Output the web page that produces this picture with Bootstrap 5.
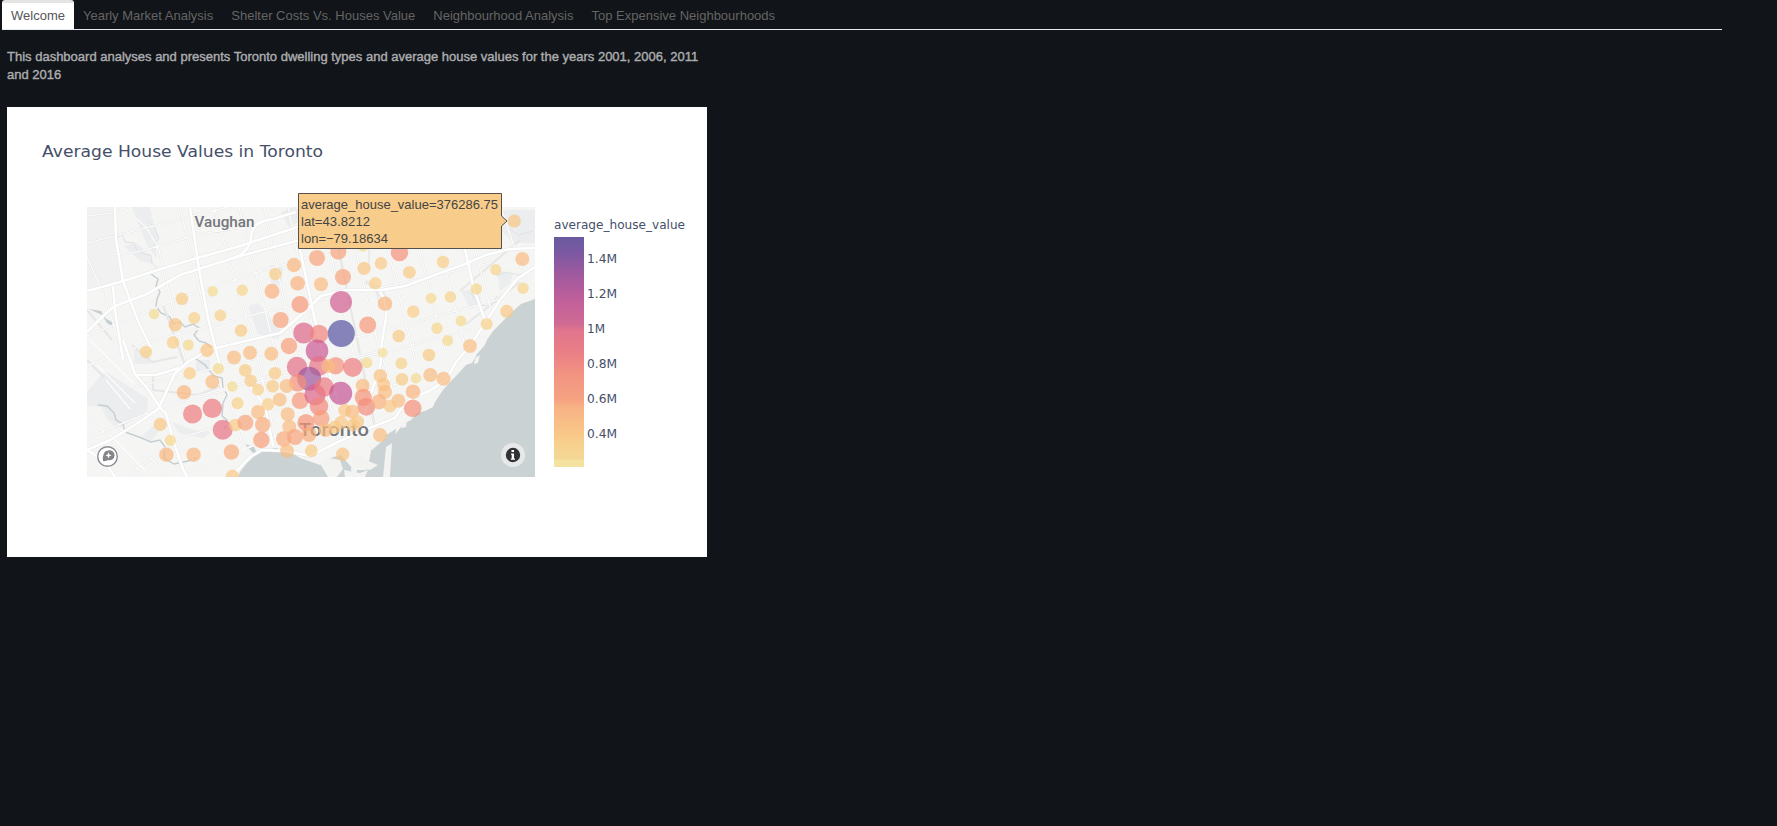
<!DOCTYPE html>
<html lang="en">
<head>
<meta charset="utf-8">
<title>Toronto Housing Dashboard</title>
<link rel="stylesheet" href="https://cdn.jsdelivr.net/npm/bootstrap@5.3.0/dist/css/bootstrap.min.css">
<script src="https://cdn.jsdelivr.net/npm/bootstrap@5.3.0/dist/js/bootstrap.bundle.min.js"></script>
<style>
body{background:#111418;font-family:"Liberation Sans",Arial,sans-serif;font-size:13px;min-height:826px;overflow:hidden}
.dash-tabs{width:1720px;height:30px;margin-left:2px;border-bottom:1px solid #e7e9ee}
.dash-tabs .nav-link{height:29px;padding:7px 9px 0;line-height:17px;color:#656565;border:0;border-radius:0;white-space:nowrap}
.dash-tabs .nav-link.active{background:#fff;color:#55555a;border-top:3px solid #e4e4e4;padding-top:4px;border-radius:3px 3px 0 0}
.intro{width:700px;margin:18px 0 0 7px;line-height:18px;height:59px;color:#acadaf;-webkit-text-stroke:.4px #acadaf}
.plot{width:700px;height:450px;margin-left:7px;background:#fff}
.plot svg{display:block}
.vd{font-family:"DejaVu Sans",Verdana,sans-serif;fill:#454f69}
.ar{font-family:"Liberation Sans",Arial,sans-serif;font-size:13px;fill:#444}
.place{font-family:Roboto,sans-serif;font-weight:500;fill:#74767b}
</style>
</head>
<body>
<ul class="nav nav-tabs flex-nowrap dash-tabs">
  <li class="nav-item"><a class="nav-link active" href="#">Welcome</a></li>
  <li class="nav-item"><a class="nav-link" href="#">Yearly Market Analysis</a></li>
  <li class="nav-item"><a class="nav-link" href="#">Shelter Costs Vs. Houses Value</a></li>
  <li class="nav-item"><a class="nav-link" href="#">Neighbourhood Analysis</a></li>
  <li class="nav-item"><a class="nav-link" href="#">Top Expensive Neighbourhoods</a></li>
</ul>
<main>
<p class="intro">This dashboard analyses and presents Toronto dwelling types and average house values for the years 2001, 2006, 2011<br>and 2016</p>
<div class="plot">
<svg width="700" height="450" viewBox="7 107 700 450">
<defs>
  <clipPath id="mapclip"><rect x="87" y="207" width="448" height="270"/></clipPath>
  <linearGradient id="sunset" x1="0" y1="0" x2="0" y2="1">
    <stop offset="0" stop-color="#6a5aa0"/><stop offset=".07" stop-color="#7b58a1"/><stop offset=".16" stop-color="#9f5a9f"/><stop offset=".28" stop-color="#c2609a"/><stop offset=".38" stop-color="#d06b93"/><stop offset=".405" stop-color="#e0748d"/><stop offset=".5" stop-color="#ea7f87"/><stop offset=".6" stop-color="#f29481"/><stop offset=".715" stop-color="#f6a482"/><stop offset=".735" stop-color="#f7b184"/><stop offset=".86" stop-color="#f8c888"/><stop offset=".91" stop-color="#f6d28e"/><stop offset=".965" stop-color="#f4d796"/><stop offset=".97" stop-color="#f4e3a0"/><stop offset="1" stop-color="#f4e3a0"/>
  </linearGradient>
</defs>
<text class="vd" x="42" y="157" font-size="16.300" textLength="281" lengthAdjust="spacingAndGlyphs">Average House Values in Toronto</text>
<g clip-path="url(#mapclip)">
  <rect x="87" y="207" width="448" height="270" fill="#f5f5f3"/>
  <!-- parks and built-up areas -->
  <g fill="#ebedee">
    <path d="M87 207H113L116 238 121 282 87 291Z" fill="#f1f1f1"/>
    <path d="M87 392L105 371 148 399 147 412 118 429 108 420 101 407 87 406Z"/>
    <path d="M132 207h18l3 14 5 14-2 22-9-12-8-19zM124 246l12-3 14 12 2 9-13-4zM250 305l8-2 25 30-6 6-19-5-9-25zM134 350h16v14h-16zM196 360h14v12h-14zM270 265l13 3-2 18-10-3zM281 212l15-6 5 14-12 8zM500 210h35v33h-20l-15-13zM497 270l16 4-3 9-10 8zM142 436l12-11 6 5-9 11zM461 291l16-3 5 16-12 5zM363 278l20 10 10 23-12-12zM172 422l25 9 14 1-8 6-24-5z"/>
  </g>
  <!-- rivers -->
  <g fill="none" stroke="#c5ced0" stroke-width="1.4">
    <path d="M151 274l7 5-2 7 4 6-3 7-1 7 5 7 9 4 3 7 7-2 5 5 8-3 6 4-5 7 5 6 7 2 7 6M195 358l10 7 9 11 8 2 1 9 4 8-4 8-1 13 5 4-2 9M98 405l9 1 7 7 2 7 7 4 2 8 14 5 12 5 9-2 5 7-1 11 10 6 14-3 8-3"/>
  </g>
  <path d="M116 240l6-6 3 8 9 1 2 6 7 5 8 1 1 8 5 5M155 245l4-7-5-11-6-5M470 292l9 13 12 1 6-10M369 248v18M507 228l12 7 14-4M496 276l10-4 13 3 13-5M365 282l12 10 2 11 11 7" fill="none" stroke="#dfe3e5"/>
  <path d="M89 309l12 2 4 7 10 6v4l-8-5-5-8zM245 444l9 3 4 8-4-1z" fill="#c5ced0"/>
  <!-- local streets -->
  <g fill="none" stroke="#e7e7e8" stroke-width="2.200">
    <path id="streets" d="M87 243L240 204M87 216L112 213 124 208 145 226 157 245V258M112 255L142 251 165 244 206 233 255 226M87 336L180 298 265 270 338 249 420 226M87 366L155 340 280 308 394 285 490 263M131 388L245 361 375 333 500 299M87 438L160 408 245 385 385 352 470 330M157 407L270 376 390 349M130 474L180 438 255 415 350 395 440 374M183 477L270 438 390 405M180 208L202 300 222 370 251 477M214 207L235 280 256 350 276 440M239 207L269 326 296 445M264 207L286 310 317 446M288 207L309 310 338 440M322 214L351 344 372 430M351 230L377 340 398 408M382 225L415 360M414 230L445 350M437 235L465 346M472 238L491 310M502 210L530 295M87 257L106 300 122 352M158 246L185 360M87 416L118 447 145 477M118 427L170 477M145 412L198 465"/>
    <path d="M87 360L104 377M132 345l20 17 25-5M163 305L185 365M112 340L87 310M153 373v17l45 5 22-9M465 325L520 282M460 291L520 240M330 207l45 220"/>
  </g>
  <g fill="none" stroke="#fdfdfd" stroke-width="1.200">
    <use href="#streets"/>
    <path d="M97 365l38 38M106 380l24 29M90 340l43 43M110 435l35 35"/>
  </g>
  <!-- lake, harbour and islands -->
  <path fill="#cad2d3" d="M535 299l-14 5-10 9-8 8-10 10-6 9-2 5-8 9-5 9-6 2-8 9-7 7-8 9-8 12-2 5-8 4-8 2-6 7-8 4-5 7-4 5-3 11-3 11-2 21H392l-2-23 5-16 1-11-13 8-11 9-3 15-3 9h-12l-8-9-5-6-8 2-13 8-20-7-11-7-14-3-17 5-11 10-7 9-4 10H245v9H535Z"/>
  <path fill="#f3f3f2" d="M319 462l11-6 3 21h-5zM329 458l11 2 3 9-6 8h-7zM386 447l6-4-2 34h-7zM352 459l8-5 8 7 10 4-8 5-12-2-2 5-5-2zM365 447l18-12 4 2-15 13zM403 420l4-1-1 8-5 1zM475 358l5-3-2 8-4 1zM344 470l16 3 8-3-3 7h-20z"/>
  <!-- highways -->
  <g fill="none" stroke="#e6e7e8" stroke-width="3.600">
    <g id="hw"><path d="M87 291L120 282 158 270 197 258 240 246 325 218"/><path d="M87 332L105 314 115 306 147 294 180 275 240 256 330 232 400 219"/><path d="M115 207L116 239 123 281 138 321 151 348"/><path d="M190 207L199 269 208 318 221 370"/><path d="M113 286l2 24 8 50"/><path d="M87 450L110 440 138 423 158 409 163 399 175 373 188 362 208 350 254 339 280 333 301 315 321 296 345 290 382 290 405 286 435 275 465 264 486 255 510 249 535 248"/><path d="M123 340L135 374 148 389 161 409 166 413 173 440 183 469 187 477"/><path d="M135 375l21 0 23-7"/><path d="M230 259q20-6 21-22t22-18l23-7"/><path d="M298 240L313 311 321 347 340 408M250 386l15 20 8 40"/><path d="M465 249L474 290 485 320"/><path d="M87 450l18 12 10 15"/><path d="M232 476L250 457 262 450 285 451 310 456 340 441 365 430 395 418 405 403 412 398 429 391 446 380 456 362 470 346 500 300 517 279 535 267M380 292q9 12 5 32t-4 33-8 30l-9 28"/></g>
  </g>
  <use href="#hw" fill="none" stroke="#fff" stroke-width="2.600"/>
  <text class="place" x="194.500" y="227" font-size="15.500" textLength="60" lengthAdjust="spacingAndGlyphs">Vaughan</text>
  <text class="place" x="299" y="436" font-size="19" textLength="70" lengthAdjust="spacingAndGlyphs">Toronto</text>
  <g id="dots"></g>
  <circle cx="107.500" cy="456.500" r="9.800" fill="#fff" stroke="#8e8e92" stroke-width="1.400"/>
  <path d="M103 461q-1-10 5-10.500a5 5 0 1 1 0 9.500q-2 1.500-5 1z" fill="#85858a"/>
  <path d="M108.500 452.300l.9 2.200 2.200.9-2.200.9-.9 2.200-.9-2.200-2.200-.9 2.200-.9z" fill="#fff"/>
  <circle cx="513" cy="455" r="12" fill="#e7e9e8"/><circle cx="513" cy="455" r="7.200" fill="#303236"/>
  <path d="M511.500 450h2.500v2h-2.500zM511 453.500h3v5h1v1.200h-4.200v-1.200h.9v-3.800h-.7z" fill="#fff"/>
</g>
<path d="M298.500 193.500H501.500V216L507 221 501.500 226V248.500H298.500Z" fill="#f8cc8a" stroke="#55514a"/>
<g class="ar">
  <text x="301" y="209" textLength="197" lengthAdjust="spacingAndGlyphs">average_house_value=376286.75</text>
  <text x="301" y="226" textLength="69" lengthAdjust="spacingAndGlyphs">lat=43.8212</text>
  <text x="301" y="243" textLength="87" lengthAdjust="spacingAndGlyphs">lon=−79.18634</text>
</g>
<text class="vd" x="554" y="229" font-size="12" textLength="131" lengthAdjust="spacingAndGlyphs">average_house_value</text>
<rect x="554" y="237" width="30" height="230" fill="url(#sunset)"/>
<g class="vd" font-size="12">
  <text x="587" y="263" textLength="30" lengthAdjust="spacingAndGlyphs">1.4M</text>
  <text x="587" y="298" textLength="30" lengthAdjust="spacingAndGlyphs">1.2M</text>
  <text x="587" y="333" textLength="18" lengthAdjust="spacingAndGlyphs">1M</text>
  <text x="587" y="368" textLength="30" lengthAdjust="spacingAndGlyphs">0.8M</text>
  <text x="587" y="403" textLength="30" lengthAdjust="spacingAndGlyphs">0.6M</text>
  <text x="587" y="438" textLength="30" lengthAdjust="spacingAndGlyphs">0.4M</text>
</g>
</svg>
</div>
</main>
<script>
// x, y, radius of each neighbourhood; the radius follows the house value
const pts=[[182,298.700,6.300],[212.700,291.300,5.300],[154,314,5.200],[194.300,318,6],[175.300,324.700,6.700],[220.300,315.300,5.900],[146,352,6.200],[173,342.500,6.200],[188.300,345,5.500],[207,350.300,6.700],[189.700,373.300,6.200],[218.300,368.500,5.500],[212.300,381.700,7],[184,392.300,7.200],[232.300,386.500,5.300],[192.600,414,9.600],[212.300,408.300,9.700],[237.500,403.300,6],[222.700,429.700,10],[160.300,424.300,6.600],[170.300,440.300,5.600],[166.400,454.700,7.200],[193.600,454.700,7.200],[231.400,452,7.700],[235.300,425,6.300],[232.400,476,6.500],
[275.300,274,6.200],[294,265,7.200],[317,258,8],[338.300,251.700,8],[242.300,290.300,5.700],[272,291.300,7.500],[297.600,283.300,7.300],[321,284.300,7],[343,277,8],[364,268.300,6.600],[381,263.400,6.300],[375.300,283.300,6.200],[385,303.700,7.200],[300,304.400,8.500],[341,302,11],[280.700,320,8],[341.300,333.500,13.500],[367.700,325,8.500],[303.700,333,10.500],[319,334,9.300],[241,330.500,6.300],[363,246,5.500],
[234,357.500,7],[250,352.700,7],[271.300,353.700,7],[289,346,8.200],[317,350.700,11.300],[297,367,10.200],[319,366,10],[309.300,378.700,12],[297.700,382.700,8.800],[286.700,386,7],[245.300,370.300,6.400],[250.700,380.700,6.300],[275,373.300,6.300],[272.700,386.300,6.300],[258,389.700,6],[279.700,399.700,6.900],[268,404.300,6.200],[258,412,7],[300,400.700,8.400],[262.700,424.700,7.700],[245.300,422.700,8],[261.300,440,8.200],[287.700,414.300,7],[289.300,426.700,7],[283.700,439,7.700],[295,437,8],[287,451,7],[311.300,450.700,6.400],[306,422.700,8.600],[309,434.300,7.600],[315,394.700,10.600],[324.300,387,9.700],[340.700,393.300,11.500],[319,406.300,9.200],[321.300,418.300,8.300],[335.700,365.700,8.700],[328.300,366,6.900],[352.700,367.300,9.600],[367,362.700,5.500],[382.700,352.700,4.900],[380.300,375.700,6.800],[362.700,385.700,7],[363.300,397.300,8.600],[366.300,406.700,9],[383.700,384.700,6.700],[385,392,7],[379,401.700,7.500],[344.700,410.300,6.500],[352.300,411.700,7],[357.700,421.700,6.500],[341,422.300,6.500],[335,427,6.500],[325.700,430,7],[353,425,6.500],[380,435,7],[342.700,454.300,6.700],
[514.300,221,6.600],[399.500,252.500,8.700],[443,262,6.200],[409.400,272.300,6.400],[522.300,259,7],[495.700,269.700,5.600],[476.300,289,5.700],[523,288.300,5.700],[431,298.300,5.400],[450.400,297,5.800],[413.300,311.700,6.200],[506.700,311.300,6.500],[486.700,324,6],[461,321,5.400],[437,328.300,5.700],[398.700,336,6.300],[447.700,340.500,5.500],[470,346,6.900],[429,355,6.300],[401.300,363.300,5.900],[402,379.300,6.300],[416,378.300,5.200],[430.300,375,7],[443.600,378.700,7],[413,391.700,7.300],[412.700,408.300,8.800],[398.300,400.700,7],[390,406,6.500]];
const scale=[[4.800,[243,225,150]],[5.500,[245,216,140]],[6.500,[250,200,132]],[7.400,[249,178,124]],[8.600,[247,148,120]],[9.700,[237,122,126]],[10.600,[220,98,138]],[11.500,[196,84,148]],[12,[158,86,156]],[13.500,[86,82,160]]];
const ns="http://www.w3.org/2000/svg",layer=document.getElementById("dots");
function shade(r){
  for(let i=1;i<scale.length;i++) if(r<=scale[i][0]){
    const [a,c]=scale[i-1],[b,d]=scale[i],t=(r-a)/(b-a);
    return "rgb("+c.map((v,k)=>Math.round(v+(d[k]-v)*t)).join()+")";
  }
}
for(const [x,y,r] of pts){
  const c=document.createElementNS(ns,"circle");
  c.setAttribute("cx",x);c.setAttribute("cy",y);c.setAttribute("r",r);
  c.setAttribute("fill",shade(r));c.setAttribute("fill-opacity",.7);
  layer.appendChild(c);
}
</script>
</body>
</html>
